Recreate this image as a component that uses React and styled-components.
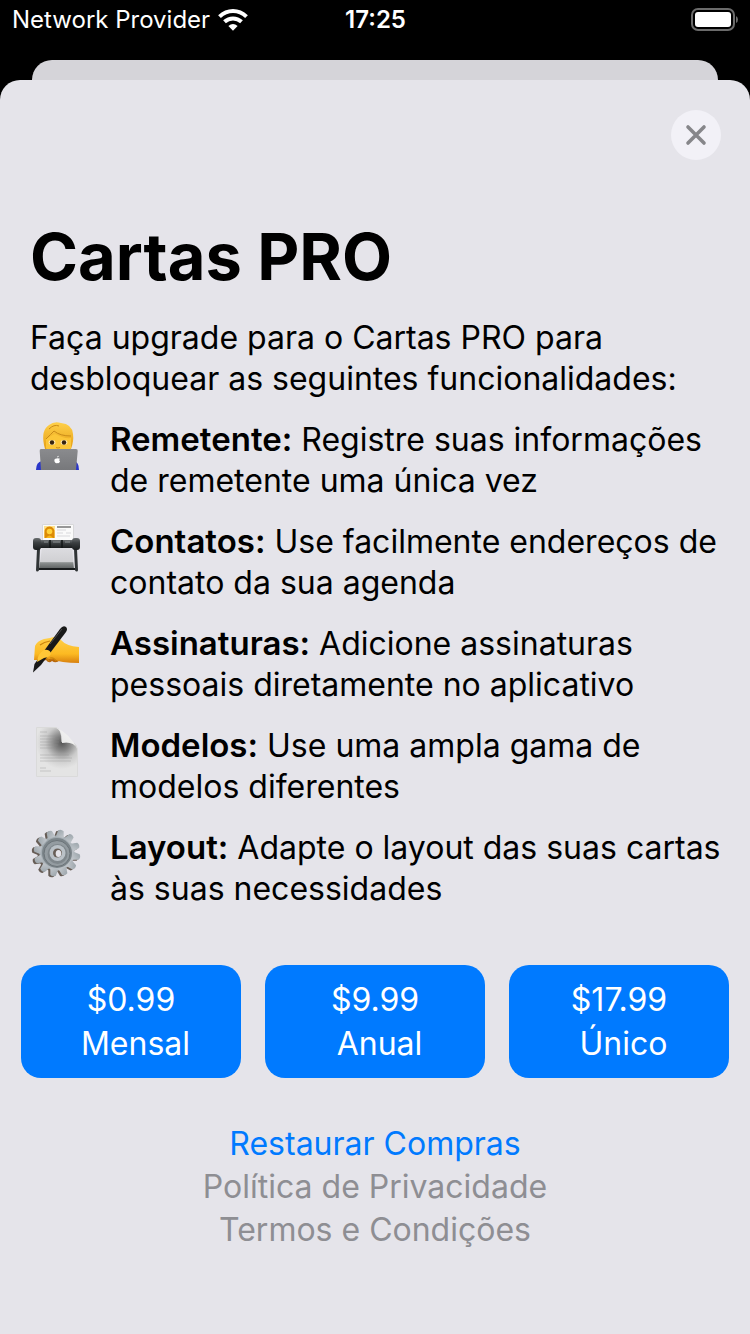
import React from "react";
import styled, { createGlobalStyle } from "styled-components";

const GlobalStyle = createGlobalStyle`
  * { box-sizing: border-box; }
  body {
    margin: 0;
    background: #000;
    color: #000;
    font-family: Inter, "Liberation Sans", sans-serif;
    -webkit-font-smoothing: antialiased;
  }
`;

const Screen = styled.div`
  min-height: 100vh;
  display: flex;
  flex-direction: column;
`;

const StatusBar = styled.header`
  height: 40px;
  margin-bottom: 20px;
  padding: 0 11px 0 12px;
  display: grid;
  grid-template-columns: 1fr auto 1fr;
  align-items: center;
  color: #fff;
  font-size: 24px;
  line-height: 28px;
`;

const Carrier = styled.div`
  display: flex;
  align-items: center;
  gap: 8px;
`;

const Clock = styled.time`
  font-weight: 600;
`;

const Battery = styled.svg`
  justify-self: end;
  display: block;
`;

const BackSheet = styled.div`
  height: 20px;
  margin: 0 32px;
  border-radius: 20px 20px 0 0;
  background: #d5d4d9;
`;

const Sheet = styled.main`
  flex: 1;
  display: flex;
  flex-direction: column;
  padding: 30px 21px 80px;
  border-radius: 20px 20px 0 0;
  background: #e5e4ea;
`;

const CloseButton = styled.button`
  align-self: flex-end;
  width: 50px;
  height: 50px;
  margin-right: 8px;
  padding: 0;
  border: 0;
  border-radius: 50%;
  background: #f2f1f7;
  display: grid;
  place-items: center;
  cursor: pointer;
`;

const Content = styled.section`
  padding: 56px 0 0 9px;
`;

const Title = styled.h1`
  margin: 0 0 20px;
  font-size: 65px;
  line-height: 81px;
  font-weight: 700;
`;

const Intro = styled.p`
  margin: 0 0 20px;
  font-size: 32px;
  line-height: 41px;
`;

const FeatureList = styled.ul`
  list-style: none;
  margin: 0;
  padding: 0;
  display: flex;
  flex-direction: column;
  gap: 20px;
`;

const Feature = styled.li`
  display: grid;
  grid-template-columns: 52px 1fr;
  column-gap: 28px;
  font-size: 32px;
  line-height: 41px;

  svg { display: block; margin-top: 1px; }
`;

const FeatureName = styled.strong`
  font-size: 33px;
  line-height: 1;
  font-weight: 600;
`;

const Plans = styled.div`
  display: grid;
  grid-template-columns: repeat(3, 1fr);
  gap: 24px;
  margin-top: 56px;
`;

const PlanButton = styled.button`
  height: 113px;
  padding: 0;
  border: 0;
  border-radius: 20px;
  background: #007aff;
  color: #fff;
  font-family: inherit;
  font-size: 32px;
  line-height: 44px;
  white-space: pre;
  cursor: pointer;
`;

const Links = styled.nav`
  margin-top: 44px;
  display: flex;
  flex-direction: column;
  align-items: center;
`;

const FooterLink = styled.a`
  color: ${(p) => (p.$primary ? "#007aff" : "#8e8e93")};
  font-size: 32px;
  line-height: 43px;
  text-decoration: none;
`;

const WifiIcon = () => (
  <svg width="30" height="22" viewBox="0 0 30 22" aria-hidden="true">
    <g fill="none" stroke="#fff" strokeWidth="4">
      <path d="M1.5 7.6Q7.5 2 15 2t13.5 5.600" />
      <path d="M6.500 12.800Q10.200 9.400 15 9.400t8.500 3.400" />
    </g>
    <path d="M10.400 17Q15 13.200 19.600 17L15 21.700Z" fill="#fff" />
  </svg>
);

const TechnologistIcon = () => (
  <svg width="52" height="52" viewBox="0 0 52 52" aria-hidden="true">
    <defs>
      <linearGradient id="techHair" x1="0" y1="0" x2="0" y2="1">
        <stop offset="0" stopColor="#ffd04a" />
        <stop offset="1" stopColor="#e69f14" />
      </linearGradient>
      <linearGradient id="techLaptop" x1="0" y1="0" x2="0" y2="1">
        <stop offset="0" stopColor="#8a8b8e" />
        <stop offset="1" stopColor="#77787b" />
      </linearGradient>
    </defs>
    <path d="M6 50Q6 42 12 41H44Q49 42 49 50Z" fill="#2a36c9" />
    <path d="M14 25Q11 10 19 5Q24 1 31 3Q42 4 43 14Q44 21 41 29H15Z" fill="url(#techHair)" />
    <path d="M16 19Q22 15 25 14Q34 19 41 18L41 28Q38 35 28 35Q18 35 16 28Z" fill="#fcc638" />
    <path d="M16 19Q21 14 24 11Q30 16 41 16M19 9Q24 4 29 6" fill="none" stroke="#c98b18" strokeWidth="1" />
    <ellipse cx="22" cy="22.500" rx="3.400" ry="2.400" fill="#ffe9b0" />
    <ellipse cx="34" cy="22.500" rx="3.400" ry="2.400" fill="#ffe9b0" />
    <circle cx="22" cy="22.500" r="2.200" fill="#37230e" />
    <circle cx="34" cy="22.500" r="2.200" fill="#37230e" />
    <path d="M26 27.500q2 1 4 0" fill="none" stroke="#c98b18" />
    <path d="M11 29H46Q48 29 47.700 31L46 50H11L9.700 31Q9.500 29 11 29Z" fill="url(#techLaptop)" />
    <path d="M26.500 38.500Q23.800 38.500 24.500 41.500Q25.500 44 27.200 43Q29 44 30 41.500Q28.300 40 30 38.800Q28 37.700 26.500 38.500ZM27 37.500Q27.200 36 28.800 35.800Q28.800 37.500 27 37.500Z" fill="#fff" />
  </svg>
);

const CardIndexIcon = () => (
  <svg width="52" height="52" viewBox="0 0 52 52" aria-hidden="true">
    <defs>
      <linearGradient id="indexMetal" x1="0" y1="0" x2="0" y2="1">
        <stop offset="0" stopColor="#6a6e70" />
        <stop offset=".4" stopColor="#3b3f41" />
        <stop offset="1" stopColor="#1a1d1e" />
      </linearGradient>
      <linearGradient id="indexTray" x1="0" y1="0" x2="0" y2="1">
        <stop offset="0" stopColor="#dcdce0" />
        <stop offset=".65" stopColor="#d0d0d3" />
        <stop offset=".7" stopColor="#8c9090" />
        <stop offset="1" stopColor="#5a5e5e" />
      </linearGradient>
    </defs>
    <path d="M12.500 2.500H43.500V20H12.500Z" fill="#fafafa" stroke="#d8d8da" />
    <path d="M14 4H25V16H14Z" fill="#ffe28a" />
    <path d="M14.500 16V11Q14 5 19.500 4.500Q25 5 24.500 11V16Z" fill="#dc8a05" />
    <circle cx="19.500" cy="9.500" r="2.800" fill="#ffd139" />
    <path d="M16 16Q19.500 11 23 16Z" fill="#f6b71c" />
    <path d="M27 5H41" stroke="#555" strokeWidth="1.200" />
    <path d="M27 8H36M27 11H33M36 11H41M27 14H40" stroke="#d8d8db" />
    <path d="M12 26H42L44 47H9Z" fill="url(#indexTray)" />
    <path d="M9 46H46V48H9Z" fill="#181b1c" />
    <path d="M8.500 27L7.500 48M45.500 27L46.500 48" stroke="#303436" strokeWidth="3" strokeLinecap="round" />
    <rect x="7" y="18" width="39" height="8" rx="2" fill="url(#indexMetal)" />
    <rect x="3" y="16" width="8" height="12" rx="3" fill="url(#indexMetal)" />
    <rect x="42" y="16" width="8" height="12" rx="3" fill="url(#indexMetal)" />
    <path d="M20 18V26M32 18V26" stroke="#111415" strokeWidth="1.500" />
    <path d="M14 20H18M23 20H30M35 20H40" stroke="#8a8f91" />
  </svg>
);

const WritingHandIcon = () => (
  <svg width="52" height="52" viewBox="0 0 52 52" aria-hidden="true">
    <defs>
      <linearGradient id="handSkin" x1="0" y1="0" x2="0" y2="1">
        <stop offset="0" stopColor="#ffd04a" />
        <stop offset=".65" stopColor="#fcba22" />
        <stop offset="1" stopColor="#d8800f" />
      </linearGradient>
    </defs>
    <path d="M11 31Q13 38 16 36Q19 40 22 37Q26 40 30 36L30 27Z" fill="#b9670c" />
    <path d="M4 36L5 22Q7 17 14 15L20 14Q27 11 31 16Q36 22 49 23V39Q40 39 33 38Q28 38 24 35Q17 36 14 33Q10 33 9 36Z" fill="url(#handSkin)" />
    <path d="M13 34Q17 33 19 37M20 34Q24 33 26 37M10 21Q14 18 20 17" fill="none" stroke="#cb850c" strokeWidth="1.200" />
    <path d="M3 48.500L4.500 40L30 5Q33 1 36 3Q38 5 36 8L11 41Z" fill="#181818" />
    <path d="M20 20L32 5" stroke="#4a4a4a" strokeWidth="1" />
    <path d="M7 38Q8 29 14 26Q19 25 21 29Q21 33 14 34Z" fill="#ffc737" />
  </svg>
);

const PageCurlIcon = () => (
  <svg width="52" height="52" viewBox="0 0 52 52" aria-hidden="true">
    <defs>
      <radialGradient id="pageShade" gradientUnits="userSpaceOnUse" cx="32" cy="20" r="26">
        <stop offset="0" stopColor="#565656" />
        <stop offset=".3" stopColor="#868686" />
        <stop offset=".65" stopColor="#cbcbcb" />
        <stop offset="1" stopColor="#e4e4e4" />
      </radialGradient>
      <linearGradient id="pageCurl" x1="0" y1="1" x2="1" y2="0">
        <stop offset="0" stopColor="#a5a5a5" />
        <stop offset=".3" stopColor="#e9e9e9" />
        <stop offset="1" stopColor="#f8f8f8" />
      </linearGradient>
    </defs>
    <path d="M6.500 4.500H26Q32 6 32 19Q46 17 47.500 26V53.500H6.500Z" transform="translate(0 -3)" fill="url(#pageShade)" stroke="#dadada" />
    <path d="M26 1.500Q39 7 47.500 23Q43 15 32 17Q33 5 26 1.500Z" fill="url(#pageCurl)" />
    <path d="M10 6H17M10 10H28M10 13H29M10 16H29M10 19H28M10 22H25M10 29H39M10 32H42M10 35H41M10 42H16M10 45H21" stroke="#8d8d8d" strokeOpacity=".45" strokeWidth=".8" />
  </svg>
);

const GearIcon = () => {
  const teeth = Array.from({ length: 12 }, (_, i) => i * 30 + 10);
  return (
    <svg width="52" height="52" viewBox="0 0 52 52" aria-hidden="true">
      <defs>
        <linearGradient id="gearMetal" x1="0" y1="0" x2="1" y2="1">
          <stop offset="0" stopColor="#97a1a7" />
          <stop offset="1" stopColor="#c3c8cd" />
        </linearGradient>
      </defs>
      {["#675d56", "url(#gearMetal)"].map((fill, i) => (
        <g key={fill} transform={`translate(${25 + i * 2} ${26 - i})`} fill={fill}>
          <circle r="17.500" />
          {teeth.map((a) => (
            <path key={a} d="M-4 -16L-2.800 -22.500Q0 -24.500 2.800 -22.500L4 -16Z" transform={`rotate(${a})`} />
          ))}
        </g>
      ))}
      <circle cx="27" cy="25" r="15" fill="#7c858a" />
      <circle cx="27" cy="25.500" r="13" fill="#949ca1" stroke="#6b7378" />
      <circle cx="27.500" cy="26" r="10" fill="#7f878c" />
      <circle cx="27.500" cy="25" r="8" fill="#bac1c7" />
      <circle cx="27.500" cy="25" r="4.500" fill="#695f58" />
      <ellipse cx="28.500" cy="25.500" rx="2.800" ry="3.500" fill="#e5e4ea" />
    </svg>
  );
};

const features = [
  { Icon: TechnologistIcon, name: "Remetente:", text: "Registre suas informações de remetente uma única vez" },
  { Icon: CardIndexIcon, name: "Contatos:", text: "Use facilmente endereços de contato da sua agenda" },
  { Icon: WritingHandIcon, name: "Assinaturas:", text: "Adicione assinaturas pessoais diretamente no aplicativo" },
  { Icon: PageCurlIcon, name: "Modelos:", text: "Use uma ampla gama de modelos diferentes" },
  { Icon: GearIcon, name: "Layout:", text: "Adapte o layout das suas cartas às suas necessidades" },
];

const plans = [
  { price: "$0.99", period: "Mensal" },
  { price: "$9.99", period: "Anual" },
  { price: "$17.99", period: "Único" },
];

export default function App() {
  return (
    <Screen>
      <GlobalStyle />
      <StatusBar>
        <Carrier>
          Network Provider
          <WifiIcon />
        </Carrier>
        <Clock>17:25</Clock>
        <Battery width="49" height="24" viewBox="0 0 49 24" role="img" aria-label="Bateria">
          <rect x="2" y="1" width="42" height="21" rx="6" fill="none" stroke="#6b6b6b" strokeWidth="2" />
          <rect x="5" y="4" width="36" height="15" rx="3" fill="#fff" />
          <path d="M46 8Q48 9 48 11.500T46 15Z" fill="#6b6b6b" />
        </Battery>
      </StatusBar>
      <BackSheet />
      <Sheet>
        <CloseButton type="button" aria-label="Fechar">
          <svg width="22" height="22" viewBox="0 0 22 22" aria-hidden="true">
            <path d="M3 3L19 19M19 3L3 19" stroke="#86868a" strokeWidth="3.600" strokeLinecap="round" />
          </svg>
        </CloseButton>
        <Content>
          <Title>Cartas PRO</Title>
          <Intro>
            Faça upgrade para o Cartas PRO para desbloquear as seguintes funcionalidades:
          </Intro>
          <FeatureList>
            {features.map(({ Icon, name, text }) => (
              <Feature key={name}>
                <Icon />
                <span>
                  <FeatureName>{name}</FeatureName> {text}
                </span>
              </Feature>
            ))}
          </FeatureList>
        </Content>
        <Plans>
          {plans.map(({ price, period }) => (
            <PlanButton key={period} type="button">
              {`${price}\n ${period}`}
            </PlanButton>
          ))}
        </Plans>
        <Links>
          <FooterLink href="#restaurar" $primary>Restaurar Compras</FooterLink>
          <FooterLink href="#privacidade">Política de Privacidade</FooterLink>
          <FooterLink href="#termos">Termos e Condições</FooterLink>
        </Links>
      </Sheet>
    </Screen>
  );
}
